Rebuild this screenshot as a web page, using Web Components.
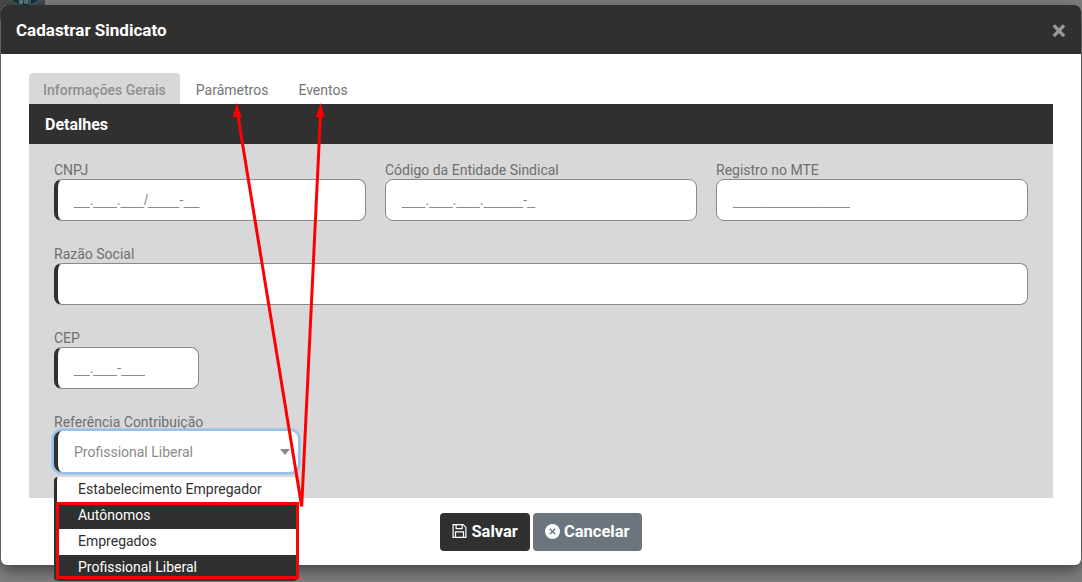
<!DOCTYPE html>
<html lang="pt-BR">
<head>
<meta charset="utf-8">
<title>Cadastrar Sindicato</title>
<style>
    html, body { margin: 0; height: 100%; overflow: hidden; }
    body { font-family: Roboto, "Liberation Sans", sans-serif; background: #7b7b7b; }
</style>
</head>
<body>
<app-backdrop>
    <sind-modal heading="Cadastrar Sindicato">
        <tab-bar>
            <tab-item active>Informações Gerais</tab-item>
            <tab-item>Parâmetros</tab-item>
            <tab-item>Eventos</tab-item>
        </tab-bar>
        <form-panel heading="Detalhes">
            <form-row>
                <mask-field label="CNPJ" mask="__.___.___/____-__"></mask-field>
                <mask-field plain label="Código da Entidade Sindical" mask="___.___.___._____-_"></mask-field>
                <mask-field plain label="Registro no MTE" mask="_______________"></mask-field>
            </form-row>
            <form-row>
                <mask-field class="full" label="Razão Social"></mask-field>
            </form-row>
            <form-row>
                <mask-field label="CEP" mask="__.___-___" width="145"></mask-field>
            </form-row>
            <form-row>
                <select-field label="Referência Contribuição" value="Profissional Liberal"></select-field>
            </form-row>
        </form-panel>
        <modal-actions slot="footer"></modal-actions>
    </sind-modal>
    <drop-list></drop-list>
    <note-arrows></note-arrows>
</app-backdrop>

<script>
class AppBackdrop extends HTMLElement {
    constructor() {
        super();
        this.attachShadow({mode: 'open'});
    }
    connectedCallback() {
        this.shadowRoot.innerHTML = `
        <style>
            :host { display: block; position: relative; width: 1082px; height: 582px; overflow: hidden; background: #7f7f7f; }
            .side { position: absolute; left: 0; top: 0; width: 45px; height: 20px; background: #4a4a4a; }
            .logo { position: absolute; left: 5px; top: -34px; width: 40px; height: 40px; box-sizing: border-box; border-radius: 50%; background: #12303a; border: 1px solid #3f6470; color: #8fa6ad; font-size: 5px; font-weight: 700; text-align: center; line-height: 71px; letter-spacing: .5px; }
            .wrap { position: relative; display: flex; padding: 5px 1px 0; }
        </style>
        <div class="side"></div>
        <div class="logo">WIKI</div>
        <div class="wrap"><slot></slot></div>
        `;
    }
}

class SindModal extends HTMLElement {
    constructor() {
        super();
        this.attachShadow({mode: 'open'});
    }
    connectedCallback() {
        this.shadowRoot.innerHTML = `
        <style>
            :host { display: block; width: 1080px; height: 560px; background: #fff; border-radius: 6px; box-shadow: 0 5px 15px rgba(0,0,0,.5); overflow: hidden; }
            header { display: flex; align-items: center; justify-content: space-between; height: 49px; padding: 0 15px; background: #303030; color: #fff; font-size: 17px; font-weight: 700; box-sizing: border-box; }
            .close { font-size: 27px; font-weight: 700; color: #9a9a9a; line-height: 1; margin-top: 4px; }
            main { padding: 19px 28px 0; }
            footer { display: flex; justify-content: center; padding-top: 15px; }
        </style>
        <header><span>${this.getAttribute('heading')}</span><span class="close">×</span></header>
        <main><slot></slot></main>
        <footer><slot name="footer"></slot></footer>
        `;
    }
}

class TabBar extends HTMLElement {
    constructor() {
        super();
        this.attachShadow({mode: 'open'});
    }
    connectedCallback() {
        this.shadowRoot.innerHTML = `
        <style>:host { display: flex; height: 31px; }</style>
        <slot></slot>
        `;
    }
}

class TabItem extends HTMLElement {
    constructor() {
        super();
        this.attachShadow({mode: 'open'});
    }
    connectedCallback() {
        this.shadowRoot.innerHTML = `
        <style>
            :host { display: block; padding: 8px 14px 0 16px; font-size: 14px; line-height: 18px; color: #757575; border-radius: 4px 4px 0 0; }
            :host([active]) { padding: 8px 14px 0; background: #d8d8d8; color: #8f8f8f; font-weight: 500; }
        </style>
        <slot></slot>
        `;
    }
}

class FormPanel extends HTMLElement {
    constructor() {
        super();
        this.attachShadow({mode: 'open'});
    }
    connectedCallback() {
        this.shadowRoot.innerHTML = `
        <style>
            :host { display: block; height: 394px; background: #d8d8d8; }
            h3 { margin: 0; height: 40px; padding: 0 16px; background: #303030; color: #fff; font-size: 16px; font-weight: 700; line-height: 41px; }
            .body { display: flex; flex-direction: column; gap: 25px; padding: 18px 25px 0; }
        </style>
        <h3>${this.getAttribute('heading')}</h3>
        <div class="body"><slot></slot></div>
        `;
    }
}

class FormRow extends HTMLElement {
    constructor() {
        super();
        this.attachShadow({mode: 'open'});
    }
    connectedCallback() {
        this.shadowRoot.innerHTML = `
        <style>:host { display: flex; gap: 19px; }</style>
        <slot></slot>
        `;
    }
}

class MaskField extends HTMLElement {
    constructor() {
        super();
        this.attachShadow({mode: 'open'});
    }
    connectedCallback() {
        const width = this.getAttribute('width');
        const full = this.classList.contains('full');
        this.shadowRoot.innerHTML = `
        <style>
            :host { display: block; width: ${full ? '100%' : (width || 312) + 'px'}; }
            label { display: block; height: 17px; font-size: 14px; line-height: 17px; color: #6f6f6f; }
            .box { height: 42px; box-sizing: border-box; background: #fff; border: 1px solid #8a8a8a; border-left: 4px solid #303030; border-radius: 8px; padding-left: 16px; font: 14px/40px "Liberation Sans", Arial, sans-serif; color: #8a8a8a; white-space: nowrap; }
            :host([plain]) .box { border-left: 1px solid #8a8a8a; }
        </style>
        <label>${this.getAttribute('label')}</label>
        <div class="box">${this.getAttribute('mask') || ''}</div>
        `;
    }
}

class SelectField extends HTMLElement {
    constructor() {
        super();
        this.attachShadow({mode: 'open'});
    }
    connectedCallback() {
        this.shadowRoot.innerHTML = `
        <style>
            :host { display: block; width: 244px; }
            label { display: block; height: 17px; font-size: 14px; line-height: 17px; color: #6f6f6f; }
            .box { position: relative; height: 41px; box-sizing: border-box; background: #fff; border-left: 4px solid #303030; border-radius: 8px; padding-left: 16px; font-size: 14px; line-height: 42px; color: #8a8a8a; box-shadow: 0 0 0 2px #96c0ea, 0 0 0 3px rgba(150,192,234,.55); }
            .caret { position: absolute; right: 8px; top: 18px; width: 0; height: 0; border: 5.5px solid transparent; border-top: 6px solid #8a8a8a; border-bottom: 0; }
        </style>
        <label>${this.getAttribute('label')}</label>
        <div class="box">${this.getAttribute('value')}<span class="caret"></span></div>
        `;
    }
}

class ModalActions extends HTMLElement {
    constructor() {
        super();
        this.attachShadow({mode: 'open'});
    }
    connectedCallback() {
        this.shadowRoot.innerHTML = `
        <style>
            :host { display: flex; gap: 3px; }
            button { display: flex; align-items: center; gap: 4px; height: 38px; padding: 0 12px 2px; border: 0; border-radius: 4px; color: #fff; font: 700 16.5px Roboto, "Liberation Sans", sans-serif; }
            .save { background: #303030; }
            .cancel { background: #6c757d; }
            svg { display: block; }
        </style>
        <button class="save">
            <svg width="15" height="16" viewBox="0 0 15 16" fill="none" stroke="#fff" stroke-width="1.2"><path d="M1.1 1.6h10l2.8 2.8v10h-12.8z"/><path d="M4.1 1.6v4h6v-4"/><path d="M3.5 14.4v-5.6h8v5.6"/></svg>
            Salvar
        </button>
        <button class="cancel">
            <svg width="15" height="15" viewBox="0 0 15 15"><circle cx="7.5" cy="7.5" r="7.5" fill="#fff"/><path d="M4.8 4.8l5.4 5.4M10.2 4.8l-5.4 5.4" stroke="#6c757d" stroke-width="1.4"/></svg>
            Cancelar
        </button>
        `;
    }
}

class DropList extends HTMLElement {
    constructor() {
        super();
        this.attachShadow({mode: 'open'});
    }
    connectedCallback() {
        this.shadowRoot.innerHTML = `
        <style>
            :host { display: block; position: absolute; left: 54px; top: 477px; width: 244px; box-sizing: border-box; background: #fff; border-left: 3px solid #303030; border-radius: 4px; font-size: 14px; color: #303030; overflow: hidden; }
            div { height: 26px; padding-left: 21px; line-height: 25px; }
            .on { background: #303030; color: #fff; }
        </style>
        <div>Estabelecimento Empregador</div>
        <div class="on">Autônomos</div>
        <div>Empregados</div>
        <div class="on">Profissional Liberal</div>
        `;
    }
}

class NoteArrows extends HTMLElement {
    constructor() {
        super();
        this.attachShadow({mode: 'open'});
    }
    connectedCallback() {
        this.shadowRoot.innerHTML = `
        <style>
            :host { display: block; position: absolute; inset: 0; pointer-events: none; }
            svg { display: block; }
        </style>
        <svg width="1082" height="582" fill="none" stroke="#f00">
            <rect x="57.5" y="503.5" width="240" height="74" stroke-width="3"/>
            <path d="M301.7 506.5L237 110M301.7 506.5L320.7 110" stroke-width="3"/>
            <path d="M236.7 103l-4 14h9z M320.7 103l-5 14h9z" fill="#f00" stroke="none"/>
        </svg>
        `;
    }
}

customElements.define('app-backdrop', AppBackdrop);
customElements.define('sind-modal', SindModal);
customElements.define('tab-bar', TabBar);
customElements.define('tab-item', TabItem);
customElements.define('form-panel', FormPanel);
customElements.define('form-row', FormRow);
customElements.define('mask-field', MaskField);
customElements.define('select-field', SelectField);
customElements.define('modal-actions', ModalActions);
customElements.define('drop-list', DropList);
customElements.define('note-arrows', NoteArrows);
</script>
</body>
</html>
